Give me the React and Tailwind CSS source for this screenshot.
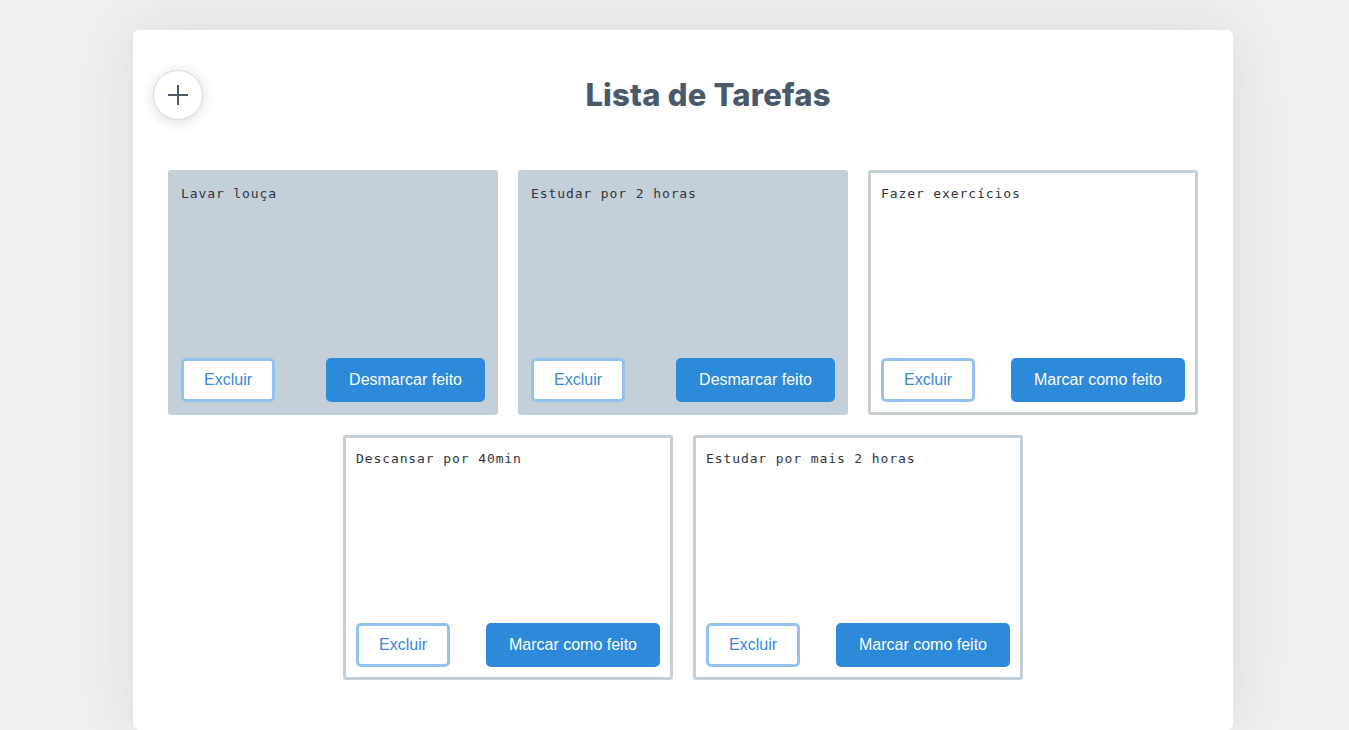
import { useState } from 'react'

const initialTasks = [
  { id: 1, text: 'Lavar louça', done: true },
  { id: 2, text: 'Estudar por 2 horas', done: true },
  { id: 3, text: 'Fazer exercícios', done: false },
  { id: 4, text: 'Descansar por 40min', done: false },
  { id: 5, text: 'Estudar por mais 2 horas', done: false },
]

function TaskCard({ task, onToggle, onDelete }) {
  return (
    <div
      className={`w-[330px] h-[245px] border-[3px] border-[#c3cfd9] rounded-[3px] p-[10px] flex flex-col ${
        task.done ? 'bg-[#c3cfd9]' : 'bg-white'
      }`}
    >
      <div className="flex-1 text-[13px] leading-[18px] tracking-[0.9px] text-[#2f3440] font-['DejaVu_Sans_Mono',monospace] pt-[2px]">
        {task.text}
      </div>
      <div className="flex items-center justify-between">
        <button
          onClick={onDelete}
          className="h-[44px] px-5 bg-white border-[3px] border-[#93c2ee] rounded-[5px] text-[16px] text-[#3b88d6]"
        >
          Excluir
        </button>
        <button
          onClick={onToggle}
          className="h-[44px] px-5 bg-[#2d89d9] border-[3px] border-[#2d89d9] rounded-[5px] text-[16px] text-white"
        >
          {task.done ? 'Desmarcar feito' : 'Marcar como feito'}
        </button>
      </div>
    </div>
  )
}

export default function App() {
  const [tasks, setTasks] = useState(initialTasks)

  const toggle = (id) => setTasks((ts) => ts.map((t) => (t.id === id ? { ...t, done: !t.done } : t)))
  const remove = (id) => setTasks((ts) => ts.filter((t) => t.id !== id))

  return (
    <div className="min-h-screen bg-[#eef2f5] pt-[30px] font-['Liberation_Sans',Arial,sans-serif]">
      <div className="w-[1100px] h-[700px] ml-[133px] bg-white rounded-[6px] shadow-[0_0_70px_rgba(60,70,80,0.14)] pt-10 px-5">
        <div className="flex items-center h-[50px]">
          <button className="w-[50px] h-[50px] rounded-full bg-white border border-[#d9d9d9] shadow-[0_2px_14px_rgba(0,0,0,0.15)] flex items-center justify-center">
            <svg width="22" height="22" viewBox="0 0 22 22" fill="none" stroke="#4a5a6a" strokeWidth="2">
              <path d="M11 1v20M1 11h20" />
            </svg>
          </button>
          <h1 className="flex-1 text-center text-[31px] font-extrabold text-[#4a5a6b] tracking-[0.2px] font-['Inter',sans-serif]">
            Lista de Tarefas
          </h1>
        </div>
        <div className="mt-[50px] flex flex-wrap justify-center gap-5 px-[15px]">
          {tasks.map((t) => (
            <TaskCard key={t.id} task={t} onToggle={() => toggle(t.id)} onDelete={() => remove(t.id)} />
          ))}
        </div>
      </div>
    </div>
  )
}
